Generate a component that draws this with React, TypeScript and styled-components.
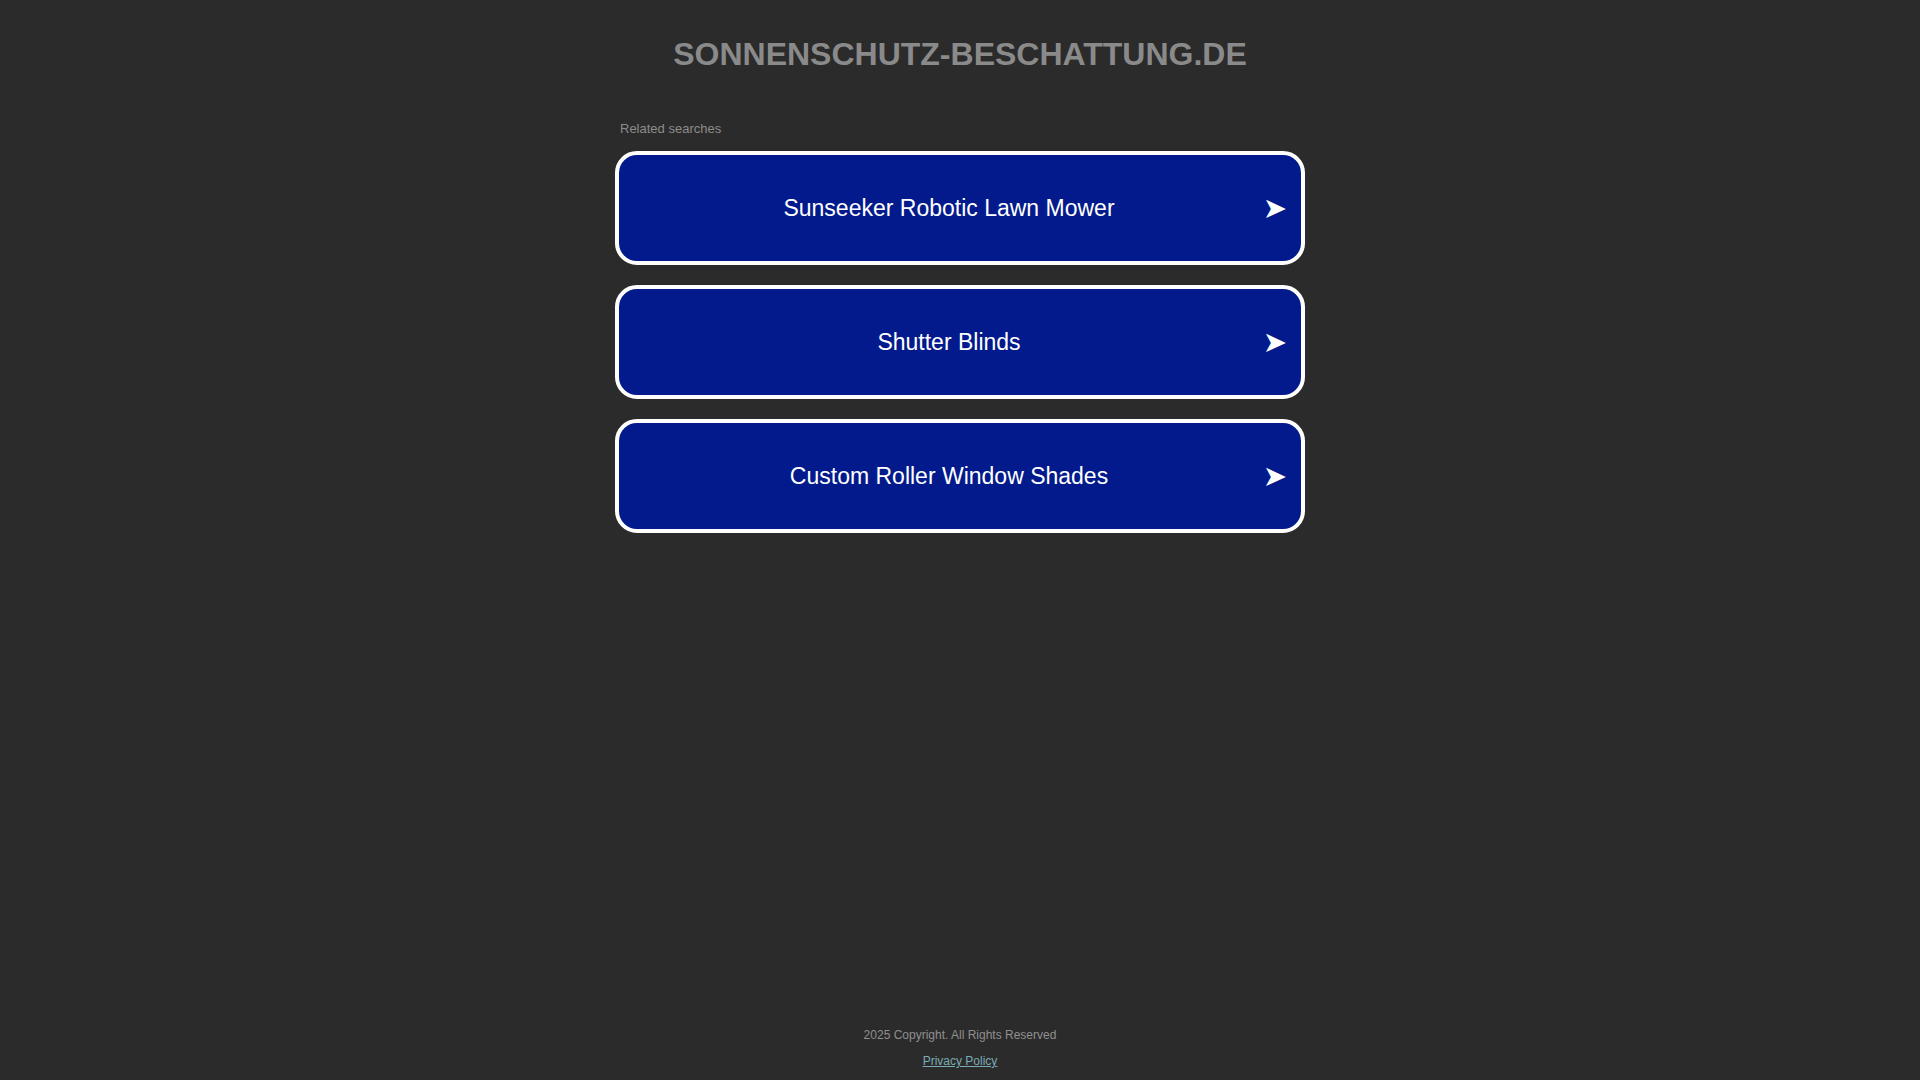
import styled, { createGlobalStyle } from 'styled-components';

const searches = ['Sunseeker Robotic Lawn Mower', 'Shutter Blinds', 'Custom Roller Window Shades'];

const GlobalStyle = createGlobalStyle`
  html, body {
    margin: 0;
    padding: 0;
    background: #2b2b2b;
    font-family: "Liberation Sans", Arial, sans-serif;
  }
`;

export default function App() {
  return (
    <>
      <GlobalStyle />
      <Page>
        <Title>SONNENSCHUTZ-BESCHATTUNG.DE</Title>
        <Results>
          <Label>Related searches</Label>
          <CardList>
            {searches.map((s) => (
              <SearchCard key={s} href="#">
                <CardText>{s}</CardText>
                <Arrow>➤</Arrow>
              </SearchCard>
            ))}
          </CardList>
        </Results>
        <Footer>
          <Copyright>2025 Copyright. All Rights Reserved</Copyright>
          <PrivacyLink href="#">Privacy Policy</PrivacyLink>
        </Footer>
      </Page>
    </>
  );
}

const Page = styled.div`
  min-height: 100vh;
  display: flex;
  flex-direction: column;
  align-items: center;
  box-sizing: border-box;
`;

const Title = styled.h1`
  margin: 0;
  padding-top: 35px;
  font-size: 32px;
  line-height: 38px;
  font-weight: 700;
  color: #8a8a8a;
`;

const Results = styled.div`
  width: 690px;
  margin-top: 48px;
`;

const Label = styled.div`
  padding-left: 5px;
  margin-bottom: 14px;
  font-size: 13px;
  line-height: 16px;
  color: #8c8c8c;
`;

const CardList = styled.div`
  display: flex;
  flex-direction: column;
  gap: 20px;
`;

const SearchCard = styled.a`
  height: 114px;
  box-sizing: border-box;
  border: 4px solid #ffffff;
  border-radius: 22px;
  background: #021a8b;
  display: flex;
  align-items: center;
  padding: 0 12px 0 18px;
  text-decoration: none;
  color: #ffffff;
`;

const CardText = styled.span`
  flex: 1;
  text-align: center;
  font-size: 23px;
  line-height: 28px;
`;

const Arrow = styled.span`
  width: 28px;
  text-align: center;
  font-size: 29px;
  line-height: 28px;
  font-family: "DejaVu Sans", sans-serif;
`;

const Footer = styled.footer`
  margin-top: auto;
  padding-bottom: 11px;
  display: flex;
  flex-direction: column;
  align-items: center;
  gap: 11px;
  font-size: 12px;
  line-height: 15px;
`;

const Copyright = styled.div`
  color: #8f8f8f;
`;

const PrivacyLink = styled.a`
  color: #7aacb3;
  text-decoration: underline;
`;
